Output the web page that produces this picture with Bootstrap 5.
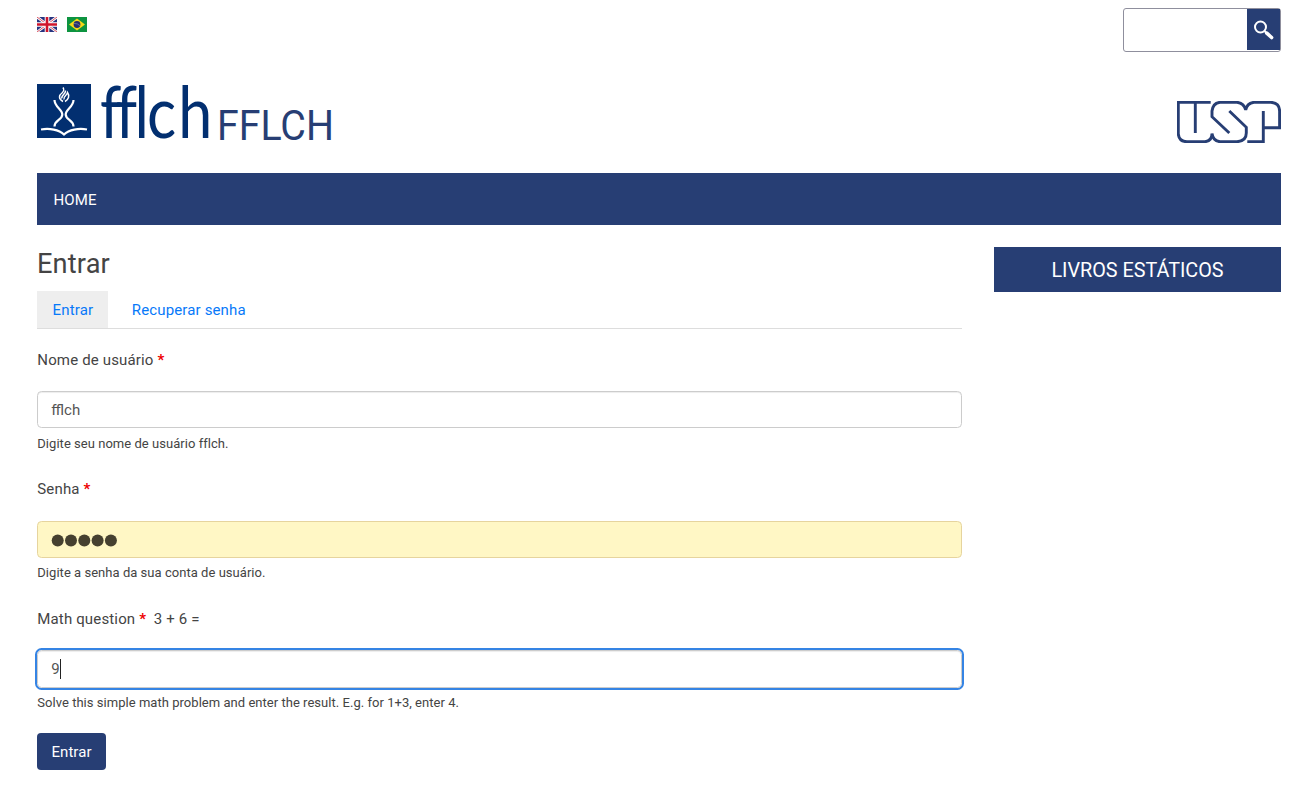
<!DOCTYPE html>
<html lang="pt-br">
<head>
<meta charset="utf-8">
<meta name="viewport" content="width=device-width, initial-scale=1">
<title>Entrar | FFLCH</title>
<link href="https://cdn.jsdelivr.net/npm/bootstrap@5.3.0/dist/css/bootstrap.min.css" rel="stylesheet">
<style>
:root { --navy: #273e74; }
body { font-family: Roboto, sans-serif; font-size: 15px; line-height: 22px; color: #444; background: #fff; overflow: hidden; }
.page { padding: 8px 34px 0 37px; }
.topbar { height: 44px; }
.flags { padding-top: 9px; gap: 10px; }
.search { width: 158px; height: 44px; border: 1px solid #8f8f9d; border-radius: 3px; }
.search input { border: 0; background: transparent; min-width: 0; padding: 0 8px; }
.search button { width: 33px; height: 41px; background: var(--navy); border: 0; padding: 0; flex: none; }
.brand-row { height: 121px; padding-top: 32px; }
.logo-word { font-family: Lato, sans-serif; font-size: 71px; font-variant-ligatures: none; }
.sitename { font-size: 43px; font-weight: 400; margin: 11px 0 0 4px; }
.usp { margin-top: 17px; }
.mainmenu { height: 52px; background: var(--navy); }
.mainmenu .nav-link { color: #fff; padding: 1px 16.5px 0; line-height: 53px; letter-spacing: .1px; }
.content { margin-top: 22px; gap: 32px; }
.sidebar { width: 287px; flex: none; }
.sidebar h2 { background: var(--navy); color: #fff; font-size: 19.8px; line-height: 44px; padding-top: 1.5px; height: 45px; font-weight: 400; margin: 0; }
h1 { font-size: 27.2px; line-height: 32px; font-weight: 400; margin: 1px 0 11px; letter-spacing: .15px; }
.tabs { border-bottom: 1px solid #ddd; height: 38px; margin-bottom: 20px; gap: 8px; }
.tabs .nav-link { color: #0779f9; padding: 1px 15px 0 15.6px; line-height: 36px; height: 37px; border-radius: 0; letter-spacing: .14px; }
.tabs .nav-link.active { background: #eee; }
.form-label { display: block; margin: 0 0 20.4px .3px; height: 22px; letter-spacing: .15px; }
.req { color: #e00; font-weight: 700; }
.page .form-control { height: 37px; border: 1px solid #ccc; border-radius: 4.5px; padding: 0 14px 0 13.3px; font-size: 15px; color: #555; box-shadow: inset 0 1px 1px rgba(0,0,0,.075); }
.page .form-control.filled { background: #fff7c5; border-color: #e6d49e; box-shadow: none; display: flex; align-items: center; }
.page .form-control.focused { outline: 2px solid #3584e4; outline-offset: 0; caret-color: transparent; height: 37.4px; }
.field { position: relative; height: 129.4px; }
.caret { position: absolute; left: 23px; top: 51px; width: 1px; height: 20px; background: #222; }
.hint { font-size: 13px; line-height: 18px; margin: 6.4px 0 0 .3px; letter-spacing: .035px; }
.submit { background: var(--navy); color: #fff; width: 69px; height: 37px; font-size: 15px; line-height: 38px; padding: 0; border: 0; border-radius: 4px; margin-top: -4.2px; letter-spacing: .05px; }
svg { display: block; flex: none; }
</style>
</head>
<body>
<div class="page">
  <div class="topbar d-flex justify-content-between">
    <div class="flags d-flex align-items-start">
      <svg width="20" height="15" viewBox="0 0 20 15" aria-label="English">
        <path fill="#26337f" d="M0 0h20v15H0z"/>
        <path d="M0 0l20 15M20 0L0 15" stroke="#fff" stroke-width="2.6"/>
        <path d="M0 0l20 15M20 0L0 15" stroke="#d0283b" stroke-width=".8"/>
        <path d="M10 0v15M0 7.5h20" stroke="#fff" stroke-width="4.6"/>
        <path d="M10 0v15M0 7.5h20" stroke="#cf142b" stroke-width="2.6"/>
      </svg>
      <svg width="20" height="15" viewBox="0 0 20 15" aria-label="Português">
        <path fill="#0d9440" d="M0 0h20v15H0z"/>
        <path fill="#f6d816" d="M10 1.5l8 6-8 6-8-6z"/>
        <circle cx="10" cy="7.5" r="3.4" fill="#28306f"/>
        <path d="M7 6.4q3.6-.2 6 2.3" fill="none" stroke="#8c9bbb" stroke-width=".6"/>
      </svg>
    </div>
    <form class="search d-flex">
      <input type="text" class="flex-grow-1" aria-label="Buscar">
      <button type="button" class="d-flex align-items-center justify-content-center" aria-label="Buscar">
        <svg width="20" height="20" viewBox="0 0 20 20" fill="none" stroke="#fff">
          <circle cx="6.5" cy="7" r="5.5" stroke-width="2"/>
          <path d="M10.500 11l2 2" stroke-width="2"/>
          <path d="M12.800 13.200l4.800 4.300" stroke-width="3.600" stroke-linecap="round"/>
        </svg>
      </button>
    </form>
  </div>

  <div class="brand-row d-flex justify-content-between">
    <div class="d-flex">
      <svg width="175" height="70" viewBox="0 0 175 70" overflow="visible" aria-label="fflch">
        <path fill="#022f70" d="M0 0h54v54H0z"/>
        <g fill="none" stroke="#fff">
          <path stroke-width="2.200" d="M17.500 16C17.500 23 25.300 25 25.300 30.500C25.300 36 17.500 36 17.500 42.500M36.500 16C36.500 23 28.700 25 28.700 30.500C28.700 36 36.500 36 36.500 42.500"/>
          <path stroke-width="2.200" d="M4 45.500C12 44 22 45.500 27 50.500C32 45.500 42 44 50 45.500"/>
          <path stroke-width="1.500" d="M26 17.500C21 15 22 11 25 9C27 7 27.500 6 26 3.500M25 14.500C23.500 12 29 10 28.500 6.500M27 15.500C26 12 30 12 30.500 8.500C33 12 31.500 15.500 28 17.500"/>
        </g>
        <text class="logo-word" transform="scale(.86 1)" x="73.200 91.500 113.500 128 164.200" y="54" fill="#022f70">fflch</text>
      </svg>
      <svg class="sitename" width="126" height="60" viewBox="0 0 126 60" overflow="visible" aria-label="FFLCH">
        <text x="1" y="45" textLength="117" lengthAdjust="spacingAndGlyphs" fill="#273e74">FFLCH</text>
      </svg>
    </div>
    <svg class="usp align-self-start" width="104" height="42" viewBox="0 0 104 42" fill="none" stroke="#273e74" stroke-width="2.900" aria-label="USP">
      <path d="M33.700 1.300H1.300V33Q2 40.700 10 40.700H28Q35 40 35 32.500Q36 40 43 40.700H60Q69.300 40 69.300 32V26.300L52.300 10"/>
      <path d="M18.300 1.300V32M52.300 32L35 15.700V10Q36 2 43 1.300H60Q67 2 68.700 9Q70 2 77 1.300H94Q102.600 2 102.600 10V26.700H86.300M86.300 10V40.700H70.300"/>
    </svg>
  </div>

  <nav class="mainmenu nav"><a class="nav-link" href="#">HOME</a></nav>

  <div class="content d-flex align-items-start">
    <main class="flex-grow-1">
      <h1>Entrar</h1>
      <nav class="tabs nav">
        <a class="nav-link active" href="#">Entrar</a>
        <a class="nav-link" href="#">Recuperar senha</a>
      </nav>
      <form>
        <div class="field">
          <label class="form-label" for="user">Nome de usuário <span class="req">*</span></label>
          <input id="user" class="form-control" type="text" value="fflch">
          <div class="hint">Digite seu nome de usuário fflch.</div>
        </div>
        <div class="field">
          <label class="form-label">Senha <span class="req">*</span></label>
          <div class="form-control filled">
            <svg width="68" height="16" viewBox="0 0 68 16" fill="#45402f">
              <circle cx="6.700" cy="9.500" r="6"/><circle cx="20" cy="9.500" r="6"/><circle cx="33.300" cy="9.500" r="6"/><circle cx="46.600" cy="9.500" r="6"/><circle cx="59.900" cy="9.500" r="6"/>
            </svg>
          </div>
          <div class="hint">Digite a senha da sua conta de usuário.</div>
        </div>
        <div class="field">
          <label class="form-label" for="math">Math question <span class="req">*</span>&nbsp; 3 + 6 =</label>
          <input id="math" class="form-control focused" type="text" value="9">
          <span class="caret"></span>
          <div class="hint">Solve this simple math problem and enter the result. E.g. for 1+3, enter 4.</div>
        </div>
        <button type="button" class="btn submit">Entrar</button>
      </form>
    </main>
    <aside class="sidebar"><h2 class="text-center">LIVROS ESTÁTICOS</h2></aside>
  </div>
</div>
<script src="https://cdn.jsdelivr.net/npm/bootstrap@5.3.0/dist/js/bootstrap.bundle.min.js"></script>
</body>
</html>
